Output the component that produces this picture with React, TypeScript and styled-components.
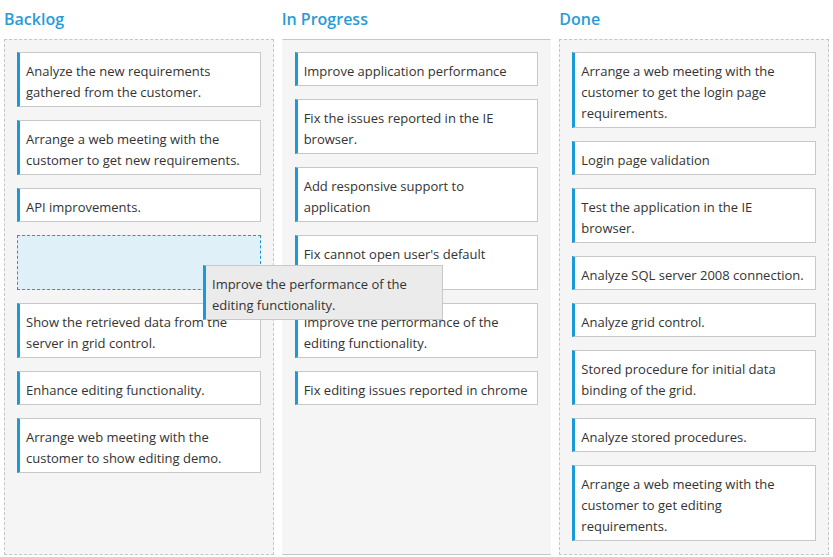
import { FC } from "react";
import styled, { createGlobalStyle } from "styled-components";

type Column = {
  key: string;
  title: string;
  variant: "dashed" | "active";
  cards: string[];
  placeholderAt?: number;
};

const columns: Column[] = [
  {
    key: "backlog",
    title: "Backlog",
    variant: "dashed",
    placeholderAt: 3,
    cards: [
      "Analyze the new requirements gathered from the customer.",
      "Arrange a web meeting with the customer to get new requirements.",
      "API improvements.",
      "Show the retrieved data from the server in grid control.",
      "Enhance editing functionality.",
      "Arrange web meeting with the customer to show editing demo.",
    ],
  },
  {
    key: "progress",
    title: "In Progress",
    variant: "active",
    cards: [
      "Improve application performance",
      "Fix the issues reported in the IE browser.",
      "Add responsive support to application",
      "Fix cannot open user's default database SQL error",
      "Improve the performance of the editing functionality.",
      "Fix editing issues reported in chrome",
    ],
  },
  {
    key: "done",
    title: "Done",
    variant: "dashed",
    cards: [
      "Arrange a web meeting with the customer to get the login page requirements.",
      "Login page validation",
      "Test the application in the IE browser.",
      "Analyze SQL server 2008 connection.",
      "Analyze grid control.",
      "Stored procedure for initial data binding of the grid.",
      "Analyze stored procedures.",
      "Arrange a web meeting with the customer to get editing requirements.",
    ],
  },
];

const KanbanColumn: FC<{ column: Column }> = ({ column }) => {
  const items = column.cards.map((text) => (
    <Card key={text}>
      <CardText>{text}</CardText>
    </Card>
  ));
  // drop target shown where the dragged card would land
  if (column.placeholderAt !== undefined) {
    items.splice(column.placeholderAt, 0, <DropPlaceholder key="drop" />);
  }

  return (
    <ColumnWrap>
      <ColumnHeader>{column.title}</ColumnHeader>
      <ColumnBody $variant={column.variant}>{items}</ColumnBody>
    </ColumnWrap>
  );
};

export default function App() {
  return (
    <>
      <GlobalStyle />
      <Board>
        {columns.map((column) => (
          <KanbanColumn key={column.key} column={column} />
        ))}
        <DraggedCard>
          <CardText>Improve the performance of the editing functionality.</CardText>
        </DraggedCard>
      </Board>
    </>
  );
}

const GlobalStyle = createGlobalStyle`
  body {
    margin: 0;
    background: #ffffff;
    font-family: "Segoe UI", "Open Sans", "Noto Sans", sans-serif;
    color: #333333;
  }
`;

const Board = styled.div`
  position: relative;
  display: grid;
  grid-template-columns: repeat(3, 1fr);
  gap: 8px;
  padding: 0 4px;
  height: 557px;
  box-sizing: border-box;
`;

const ColumnWrap = styled.div`
  display: flex;
  flex-direction: column;
  min-width: 0;
`;

const ColumnHeader = styled.div`
  height: 39px;
  line-height: 39px;
  font-size: 16px;
  font-weight: 600;
  color: #2a9bd8;
`;

const ColumnBody = styled.div<{ $variant: "dashed" | "active" }>`
  display: flex;
  flex-direction: column;
  gap: 13px;
  height: 516px;
  box-sizing: border-box;
  padding: 12px;
  background: #f5f5f5;
  border: 1px dashed #c6c6c6;
  ${({ $variant }) =>
    $variant === "active" &&
    `
    border-style: solid;
    border-left-color: transparent;
    border-right-color: transparent;
  `}
`;

const Card = styled.div`
  box-sizing: border-box;
  background: #ffffff;
  border: 1px solid #c8c8c8;
  border-left: 3px solid #1a9ad8;
  padding: 8px 8px 3px 6px;
`;

const CardText = styled.div`
  font-size: 13px;
  line-height: 21px;
  color: #333333;
`;

const DropPlaceholder = styled.div`
  height: 55px;
  box-sizing: border-box;
  background: #e0f0f9;
  border: 1px dashed #1a9ad8;
`;

const DraggedCard = styled(Card)`
  position: absolute;
  left: 203px;
  top: 265px;
  width: 240px;
  background: #ebebeb;
`;
